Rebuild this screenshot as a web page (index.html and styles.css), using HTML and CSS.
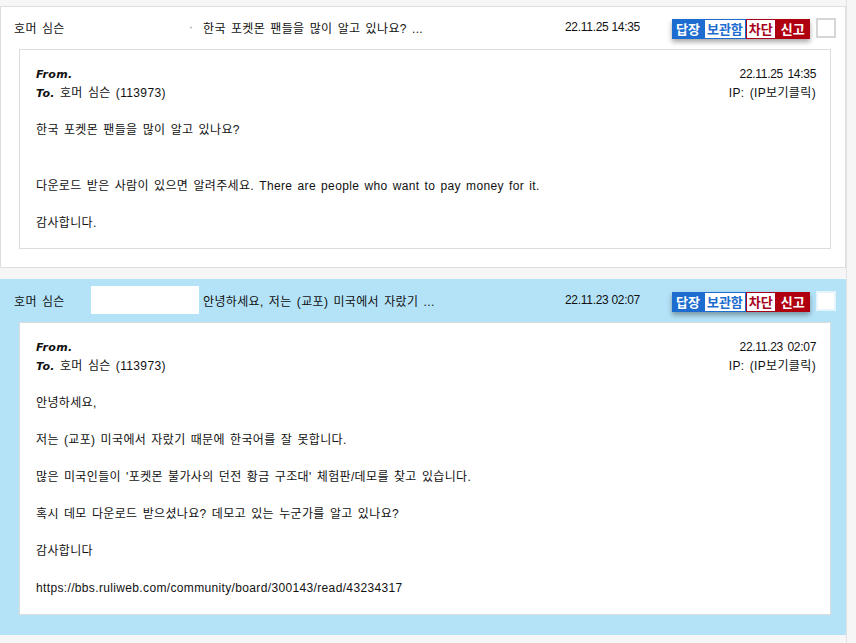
FILE: index.html
```html
<!DOCTYPE html>
<html lang="ko">
<head>
<meta charset="utf-8">
<title>쪽지함</title>
<link rel="stylesheet" href="styles.css">
</head>
<body>
<div class="wrap">
  <div class="msg">
    <div class="msg-head">
      <span class="name">호머 심슨</span>
      <span class="thumb empty"><span class="dot">·</span></span>
      <span class="subject">한국 포켓몬 팬들을 많이 알고 있나요? ...</span>
      <span class="date">22.11.25 14:35</span>
      <span class="btns">
        <span class="b b-reply">답장</span><span class="b b-keep">보관함</span><span class="b b-block">차단</span><span class="b b-report">신고</span>
      </span>
      <span class="check"></span>
    </div>
    <div class="msg-box">
      <div class="meta">
        <div class="meta-l">
          <div><b class="lbl">From.</b></div>
          <div><b class="lbl">To.</b> 호머 심슨 (113973)</div>
        </div>
        <div class="meta-r">
          <div class="mdate">22.11.25 14:35</div>
          <div>IP: (IP보기클릭)</div>
        </div>
      </div>
      <div class="body">한국 포켓몬 팬들을 많이 알고 있나요?<br><br><br>다운로드 받은 사람이 있으면 알려주세요. There are people who want to pay money for it.<br><br>감사합니다.</div>
    </div>
  </div>

  <div class="msg unread">
    <div class="msg-head">
      <span class="name">호머 심슨</span>
      <span class="thumb"></span>
      <span class="subject">안녕하세요, 저는 (교포) 미국에서 자랐기 ...</span>
      <span class="date">22.11.23 02:07</span>
      <span class="btns">
        <span class="b b-reply">답장</span><span class="b b-keep">보관함</span><span class="b b-block">차단</span><span class="b b-report">신고</span>
      </span>
      <span class="check"></span>
    </div>
    <div class="msg-box">
      <div class="meta">
        <div class="meta-l">
          <div><b class="lbl">From.</b></div>
          <div><b class="lbl">To.</b> 호머 심슨 (113973)</div>
        </div>
        <div class="meta-r">
          <div class="mdate">22.11.23 02:07</div>
          <div>IP: (IP보기클릭)</div>
        </div>
      </div>
      <div class="body">안녕하세요,<br><br>저는 (교포) 미국에서 자랐기 때문에 한국어를 잘 못합니다.<br><br>많은 미국인들이 '포켓몬 불가사의 던전 황금 구조대' 체험판/데모를 찾고 있습니다.<br><br>혹시 데모 다운로드 받으셨나요? 데모고 있는 누군가를 알고 있나요?<br><br>감사합니다<br><br>https://bbs.ruliweb.com/community/board/300143/read/43234317</div>
    </div>
  </div>
</div>
</body>
</html>
```

FILE: styles.css
```css
html, body {
  margin: 0;
  padding: 0;
}
body {
  background: #f6f6f6;
  font-family: "Liberation Sans", "Noto Sans CJK KR", sans-serif;
  font-size: 12px;
  color: #111;
}
.wrap {
  width: 846px;
  border-right: 1px solid #e2e2e2;
  padding-top: 6px;
  min-height: 637px;
}
.msg {
  background: #fff;
  border: 1px solid #dedede;
  margin-bottom: 11px;
}
.msg.unread {
  background: #b4e3f8;
  border-color: #b4e3f8;
}
.msg-head {
  height: 40px;
  display: flex;
  align-items: center;
  padding-left: 13px;
  white-space: nowrap;
}
.name,
.subject,
.meta,
.body {
  letter-spacing: 0.35px;
  word-spacing: 1.5px;
}
.name {
  width: 77px;
  flex: none;
}
.thumb {
  width: 108px;
  height: 28px;
  margin-right: 4px;
  background: #fff;
  flex: none;
  display: flex;
  align-items: center;
  justify-content: flex-end;
}
.thumb.empty {
  background: transparent;
}
.dot {
  color: #888;
  font-size: 12px;
  margin-right: 6px;
}
.subject {
  width: 362px;
  flex: none;
  overflow: hidden;
}
.date {
  width: 76px;
  flex: none;
  letter-spacing: -0.3px;
}
.btns {
  display: flex;
  margin-left: 31px;
  margin-top: 4px;
  box-shadow: 0 3px 5px rgba(0, 0, 0, 0.35);
}
.b {
  display: block;
  height: 18px;
  line-height: 18px;
  padding: 0 2px;
  font-family: "Noto Sans CJK KR", sans-serif;
  font-weight: bold;
  font-size: 13px;
  border: 1px solid transparent;
}
.b-reply {
  background: #1c6dcf;
  border-color: #1c6dcf;
  color: #fff;
  padding: 0 3px;
}
.b-keep {
  background: #fff;
  border-color: #1c6dcf;
  color: #1c6dcf;
}
.b-block {
  background: #fff;
  border-color: #a8001a;
  color: #a8001a;
}
.b-report {
  background: #b0000f;
  border-color: #b0000f;
  color: #fff;
  padding: 0 4px;
}
.check {
  width: 16px;
  height: 16px;
  margin-left: 6px;
  margin-top: 1px;
  border: 2px solid #d6d6d6;
  background: #fff;
  flex: none;
}
.unread .check {
  border-color: #e6f4fb;
}
.msg-box {
  background: #fff;
  border: 1px solid #dcdcdc;
  margin: 2px 14px 18px 18px;
  padding: 15px 14px 16px 16px;
}
.unread .msg-box {
  margin-bottom: 19px;
}
.meta {
  display: flex;
  justify-content: space-between;
  line-height: 19px;
}
.meta-r {
  text-align: right;
}
.meta-r .mdate {
  letter-spacing: -0.3px;
}
.lbl {
  font-family: "DejaVu Sans", sans-serif;
  font-style: italic;
  font-weight: bold;
  font-size: 11px;
  letter-spacing: 0.3px;
}
.body {
  margin-top: 18px;
  line-height: 18.5px;
}
```
